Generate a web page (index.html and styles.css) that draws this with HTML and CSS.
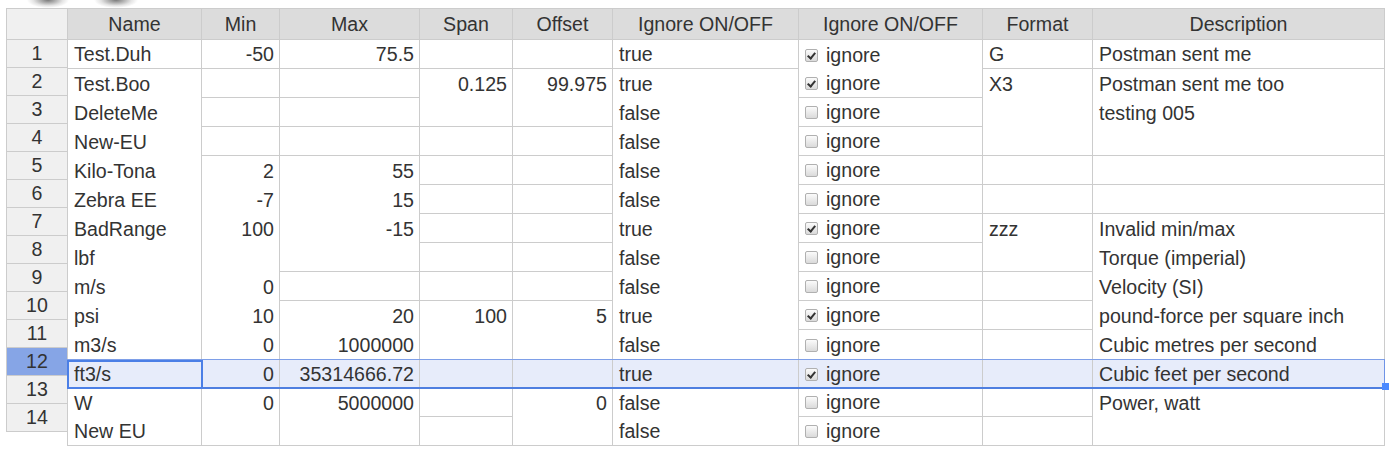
FILE: index.html
```html
<!DOCTYPE html>
<html>
<head>
<meta charset="utf-8">
<link rel="stylesheet" href="styles.css">
</head>
<body>
<div class="blob blob1"></div>
<div class="blob blob2"></div>
<div class="sheet">
  <div class="head">
    <div class="hc corner"></div>
    <div class="hc">Name</div>
    <div class="hc">Min</div>
    <div class="hc">Max</div>
    <div class="hc">Span</div>
    <div class="hc">Offset</div>
    <div class="hc">Ignore ON/OFF</div>
    <div class="hc">Ignore ON/OFF</div>
    <div class="hc">Format</div>
    <div class="hc">Description</div>
  </div>
  <div class="body">
    <div class="rowheads">
      <div class="rh">1</div><div class="rh">2</div><div class="rh">3</div><div class="rh">4</div>
      <div class="rh">5</div><div class="rh">6</div><div class="rh">7</div><div class="rh">8</div>
      <div class="rh">9</div><div class="rh">10</div><div class="rh">11</div><div class="rh sel">12</div>
      <div class="rh">13</div><div class="rh">14</div>
    </div>
    <div class="grid">
      <!-- row 1 -->
      <div class="c first b">Test.Duh</div><div class="c num b">-50</div><div class="c num b">75.5</div><div class="c num b"></div><div class="c num b"></div><div class="c b">true</div><div class="c"><span class="cb on"></span>ignore</div><div class="c b">G</div><div class="c b">Postman sent me</div>
      <!-- row 2 -->
      <div class="c first">Test.Boo</div><div class="c num b"></div><div class="c num b"></div><div class="c num">0.125</div><div class="c num">99.975</div><div class="c">true</div><div class="c b"><span class="cb on"></span>ignore</div><div class="c">X3</div><div class="c">Postman sent me too</div>
      <!-- row 3 -->
      <div class="c first">DeleteMe</div><div class="c num b"></div><div class="c num b"></div><div class="c num b"></div><div class="c num b"></div><div class="c">false</div><div class="c b"><span class="cb"></span>ignore</div><div class="c"></div><div class="c">testing 005</div>
      <!-- row 4 -->
      <div class="c first">New-EU</div><div class="c num b"></div><div class="c num b"></div><div class="c num b"></div><div class="c num b"></div><div class="c">false</div><div class="c b"><span class="cb"></span>ignore</div><div class="c b"></div><div class="c b"></div>
      <!-- row 5 -->
      <div class="c first">Kilo-Tona</div><div class="c num">2</div><div class="c num">55</div><div class="c num b"></div><div class="c num b"></div><div class="c">false</div><div class="c b"><span class="cb"></span>ignore</div><div class="c b"></div><div class="c b"></div>
      <!-- row 6 -->
      <div class="c first">Zebra EE</div><div class="c num">-7</div><div class="c num">15</div><div class="c num b"></div><div class="c num b"></div><div class="c">false</div><div class="c b"><span class="cb"></span>ignore</div><div class="c b"></div><div class="c b"></div>
      <!-- row 7 -->
      <div class="c first">BadRange</div><div class="c num">100</div><div class="c num">-15</div><div class="c num b"></div><div class="c num b"></div><div class="c">true</div><div class="c b"><span class="cb on"></span>ignore</div><div class="c">zzz</div><div class="c">Invalid min/max</div>
      <!-- row 8 -->
      <div class="c first">lbf</div><div class="c num"></div><div class="c num b"></div><div class="c num b"></div><div class="c num b"></div><div class="c">false</div><div class="c b"><span class="cb"></span>ignore</div><div class="c b"></div><div class="c">Torque (imperial)</div>
      <!-- row 9 -->
      <div class="c first">m/s</div><div class="c num">0</div><div class="c num b"></div><div class="c num b"></div><div class="c num b"></div><div class="c">false</div><div class="c b"><span class="cb"></span>ignore</div><div class="c b"></div><div class="c">Velocity (SI)</div>
      <!-- row 10 -->
      <div class="c first">psi</div><div class="c num">10</div><div class="c num">20</div><div class="c num">100</div><div class="c num">5</div><div class="c">true</div><div class="c b"><span class="cb on"></span>ignore</div><div class="c b"></div><div class="c">pound-force per square inch</div>
      <!-- row 11 -->
      <div class="c first">m3/s</div><div class="c num">0</div><div class="c num">1000000</div><div class="c num"></div><div class="c num"></div><div class="c">false</div><div class="c"><span class="cb"></span>ignore</div><div class="c"></div><div class="c">Cubic metres per second</div>
      <!-- row 12 (selected) -->
      <div class="c first s">ft3/s</div><div class="c num s">0</div><div class="c num s">35314666.72</div><div class="c num s"></div><div class="c num s"></div><div class="c s">true</div><div class="c s"><span class="cb on"></span>ignore</div><div class="c s"></div><div class="c s">Cubic feet per second</div>
      <!-- row 13 -->
      <div class="c first">W</div><div class="c num">0</div><div class="c num">5000000</div><div class="c num b"></div><div class="c num">0</div><div class="c">false</div><div class="c b"><span class="cb"></span>ignore</div><div class="c b"></div><div class="c">Power, watt</div>
      <!-- row 14 -->
      <div class="c first b">New EU</div><div class="c num b"></div><div class="c num b"></div><div class="c num b"></div><div class="c num b"></div><div class="c b">false</div><div class="c b"><span class="cb"></span>ignore</div><div class="c b"></div><div class="c b"></div>

      <div class="selrow"></div>
      <div class="active"></div>
      <div class="handle"></div>
    </div>
  </div>
</div>
</body>
</html>
```
FILE: styles.css
```css
html, body {
  margin: 0;
  padding: 0;
  background: #ffffff;
}
body {
  font-family: "Liberation Sans", Arial, sans-serif;
  font-size: 19.6px;
  color: #333333;
  position: relative;
  height: 454px;
  overflow: hidden;
}
.blob {
  position: absolute;
  top: 0;
  height: 8px;
  background: radial-gradient(ellipse 50% 100% at 50% 0%, rgba(50,50,50,0.65), rgba(120,120,120,0.2) 70%, rgba(255,255,255,0) 100%);
}
.blob1 { left: 27px; width: 42px; }
.blob2 { left: 94px; width: 44px; }

.sheet {
  padding: 8px 0 0 6px;
}
.head {
  display: grid;
  grid-template-columns: 62px 134px 78px 140px 93px 100px 186px 184px 110px 292px;
  height: 32px;
}
.hc {
  box-sizing: border-box;
  background: #dcdcdc;
  border-top: 1px solid #cccccc;
  border-bottom: 1px solid #cccccc;
  border-right: 1px solid #cccccc;
  text-align: center;
  line-height: 31px;
  white-space: nowrap;
  overflow: hidden;
}
.hc.corner {
  background: #f0f0f0;
  border-left: 1px solid #cccccc;
}
.body {
  display: flex;
  align-items: flex-start;
}
.rowheads {
  width: 61px;
  display: flex;
  flex-direction: column;
}
.rh {
  box-sizing: border-box;
  height: 28px;
  background: #f0f0f0;
  border-left: 1px solid #cccccc;
  border-bottom: 1px solid #cccccc;
  text-align: center;
  line-height: 27px;
}
.rh.sel {
  background: #86a5e6;
}
.grid {
  position: relative;
  display: grid;
  grid-template-columns: 135px 78px 140px 93px 100px 186px 184px 110px 292px;
  grid-auto-rows: 29px;
}
.c {
  box-sizing: border-box;
  border-right: 1px solid #cccccc;
  padding: 1px 6px 0 6px;
  white-space: nowrap;
  overflow: hidden;
  display: flex;
  align-items: center;
}
.c.first {
  border-left: 1px solid #cccccc;
}
.c.num {
  justify-content: flex-end;
  padding-right: 5px;
}
.c.b {
  border-bottom: 1px solid #cccccc;
}
.c.s {
  background: #e7ecfa;
}
.cb {
  display: inline-block;
  box-sizing: border-box;
  width: 13px;
  height: 13px;
  margin: 0 8px 0 0;
  border: 1px solid #b0b0b0;
  border-radius: 2px;
  background: linear-gradient(#fbfbfb, #dadada);
  position: relative;
  flex: none;
}
.cb.on::after {
  content: "";
  position: absolute;
  left: 3px;
  top: 1px;
  width: 3px;
  height: 6px;
  border-right: 2px solid #333333;
  border-bottom: 2px solid #333333;
  transform: rotate(40deg);
}
.selrow {
  position: absolute;
  left: 0;
  right: 0;
  top: 319px;
  height: 30px;
  box-sizing: border-box;
  border-top: 1px solid #7e9fe8;
  border-right: 1px solid #6f93e6;
  border-bottom: 2px solid #4f7fe0;
  pointer-events: none;
}
.active {
  position: absolute;
  left: 0;
  top: 320px;
  width: 136px;
  height: 29px;
  box-sizing: border-box;
  border: 2px solid #4b7fe6;
}
.handle {
  position: absolute;
  right: -4px;
  top: 343px;
  width: 7px;
  height: 7px;
  background: #4b89ff;
}
```
